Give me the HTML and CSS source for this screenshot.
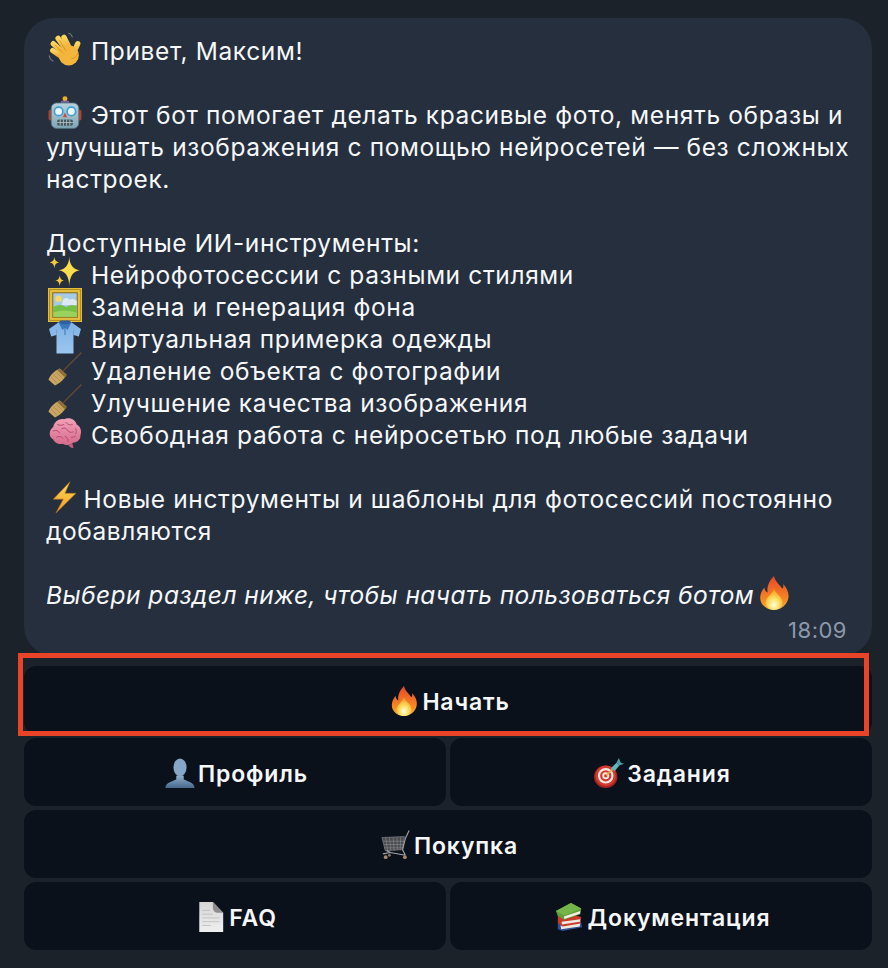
FILE: index.html
```html
<!DOCTYPE html>
<html lang="ru">
<head>
    <meta charset="UTF-8">
    <title>Бот - стартовое сообщение</title>
    <link rel="stylesheet" href="styles.css">
</head>
<body>
    <svg class="sprite" xmlns="http://www.w3.org/2000/svg">
        <defs>
            <linearGradient id="g-hand" x1="0" y1="0" x2="0" y2="1"><stop offset="0" stop-color="#fbd45e"/><stop offset="1" stop-color="#eca42c"/></linearGradient>
            <linearGradient id="g-fire" x1="0" y1="0" x2="0" y2="1"><stop offset="0" stop-color="#e8452a"/><stop offset="0.7" stop-color="#f58a22"/><stop offset="1" stop-color="#fbb03b"/></linearGradient>
            <radialGradient id="g-flame" cx="0.5" cy="0.75" r="0.65"><stop offset="0" stop-color="#fffde0"/><stop offset="0.45" stop-color="#ffe166"/><stop offset="1" stop-color="#f9a024"/></radialGradient>
            <linearGradient id="g-person" x1="0" y1="0" x2="0" y2="1"><stop offset="0" stop-color="#8eaecd"/><stop offset="1" stop-color="#47688c"/></linearGradient>
            <linearGradient id="g-shirt" x1="0" y1="0" x2="0" y2="1"><stop offset="0" stop-color="#7fb2e6"/><stop offset="1" stop-color="#9cc6ee"/></linearGradient>
            <linearGradient id="g-bolt" x1="0" y1="0" x2="0" y2="1"><stop offset="0" stop-color="#fbdc5c"/><stop offset="1" stop-color="#f29a1f"/></linearGradient>
            <linearGradient id="g-brain" x1="0" y1="0" x2="0" y2="1"><stop offset="0" stop-color="#f2a3b8"/><stop offset="1" stop-color="#d76a8c"/></linearGradient>
            <linearGradient id="g-page" x1="0" y1="0" x2="0" y2="1"><stop offset="0" stop-color="#d6d6d6"/><stop offset="1" stop-color="#efefef"/></linearGradient>
            <linearGradient id="g-robot" x1="0" y1="0" x2="0" y2="1"><stop offset="0" stop-color="#b6d2dc"/><stop offset="1" stop-color="#7fa6b6"/></linearGradient>
        </defs>
        <symbol id="e-wave" viewBox="0 0 32 32">
            <path d="M19 1c2 .5 3.500 2 4 4M1 22c.5 2.500 2 4.500 4 5.500" fill="none" stroke="#6d7682" stroke-width="1"/>
            <g stroke="url(#g-hand)" stroke-linecap="round" fill="none" stroke-width="5">
                <path d="M21 17 15 5"/>
                <path d="M18 18 9.500 6"/>
                <path d="M15 20 5 11"/>
                <path d="M14 24 4.500 17.500"/>
                <path d="M24 20 28 11"/>
            </g>
            <ellipse cx="19.500" cy="22" rx="9.500" ry="9.500" fill="#f2b63c"/>
            <path d="M11 8l6 10M6.500 12l8 8M22 25c3 0 5-2 6-5" fill="none" stroke="#d98f1e" stroke-width=".8"/>
        </symbol>
        <symbol id="e-robot" viewBox="0 0 32 32">
            <rect x="14.500" y="3" width="3" height="4" fill="#f0a21e"/>
            <circle cx="16" cy="2.500" r="2.300" fill="#f2ad2a"/>
            <rect x="12" y="4.500" width="8" height="2.500" rx="1.200" fill="#7a5fa8"/>
            <rect x="0.500" y="13" width="4" height="10" rx="1.500" fill="#b3402f"/>
            <rect x="27.500" y="13" width="4" height="10" rx="1.500" fill="#b3402f"/>
            <rect x="3" y="6.500" width="26" height="24" rx="5" fill="url(#g-robot)" stroke="#4d6b7a" stroke-width=".8"/>
            <circle cx="10" cy="14.500" r="4" fill="#e8f7ff" stroke="#3fa0d8" stroke-width="1.600"/>
            <circle cx="22" cy="14.500" r="4" fill="#e8f7ff" stroke="#3fa0d8" stroke-width="1.600"/>
            <path d="M16 15.500 18 20H14Z" fill="#d8483a"/>
            <rect x="8.500" y="22" width="15" height="6" rx="2" fill="#43575f"/>
            <path d="M11.500 22v6M14.500 22v6M17.500 22v6M20.500 22v6M8.500 25h15" stroke="#b4c4ca" stroke-width=".8"/>
        </symbol>
        <symbol id="e-sparkles" viewBox="0 0 32 32">
            <path d="M20 .5Q20.500 12.500 30 13.500 20.500 14.500 20 28.500 19.500 14.500 10 13.500 19.500 12.500 20 .5Z" fill="#f9dc4e"/>
            <path d="M6 1Q6.300 5.700 10.500 6 6.300 6.300 6 11.500 5.700 6.300 1.500 6 5.700 5.700 6 1Z" fill="#f4c93a"/>
            <path d="M11 18Q11.300 22.700 15 23 11.300 23.300 11 28.500 10.700 23.300 7 23 10.700 22.700 11 18Z" fill="#f4c93a"/>
        </symbol>
        <symbol id="e-picture" viewBox="0 0 32 32">
            <rect x="0" y="0" width="32" height="32" fill="#e3bd3c"/>
            <rect x="1.500" y="1.500" width="29" height="29" fill="none" stroke="#a8841f" stroke-width=".8"/>
            <rect x="4.500" y="4.500" width="23" height="23" fill="#a5cbe8" stroke="#8c6c18"/>
            <circle cx="10" cy="10" r="3" fill="#f4dc62"/>
            <path d="M14 11c2-2 5-2 6 0 2-1 5-1 7 1v4H13Z" fill="#dce8f2"/>
            <path d="M5 18c5-3 9-2 12 0 3-2 7-2 10-1v10H5Z" fill="#74bf48"/>
            <path d="M5 23c6-2 14-2 22 0v4H5Z" fill="#9ad25e"/>
        </symbol>
        <symbol id="e-shirt" viewBox="0 0 32 32">
            <path d="M10 2 1 8.500 3 15.500 8 14V31.500H24V14L29 15.500 31 8.500 22 2Z" fill="url(#g-shirt)"/>
            <path d="M10 2 16 8 22 2 20 .5H12Z" fill="#2f5f9e"/>
            <path d="M10 2 13.500 9.500 16 7 18.500 9.500 22 2 19 4H13Z" fill="#3e78bb"/>
            <path d="M16 7v7" stroke="#3e78bb" stroke-width="1"/>
            <path d="M8 14V9M24 14V9" stroke="#6a9fd6" stroke-width=".8"/>
        </symbol>
        <symbol id="e-broom" viewBox="0 0 32 32">
            <path d="M31.500 .5 14 18" stroke="#6d4c35" stroke-width="1.100"/>
            <path d="M11 15.500 17.500 21.500C15.500 25.500 10 30.500 6.500 31.500L.5 26C1.500 22 6.500 17.500 11 15.500Z" fill="#c9a661"/>
            <path d="M11 15.500 17.500 21.500 16 24 8.500 17Z" fill="#8d6f3a"/>
            <path d="M5 21 11.500 27.500M3 23.500 8.500 29.500M8 19.500 14 25" stroke="#a3854a" stroke-width=".7"/>
        </symbol>
        <symbol id="e-brain" viewBox="0 0 32 32">
            <path d="M19 27c1 2 3 3.500 5 3l-1-4Z" fill="#c65a7c"/>
            <path d="M5 10C6 5 11 2 15 3 20 .5 26 3 27 8 31 10 32 15 30.500 18 31 22 27 25 24 25 21 28 16 27.500 14 26 10 27 6 25 5 22 1 20 0 14 5 10Z" fill="url(#g-brain)"/>
            <path d="M9 8c2 1 4 1 6 0M17 6c1 2 4 3 6 2M5 14c3-1 5 0 6 2M13 12c2-1 4-1 5 1s3 3 6 2M26 12c1 2 1 4 0 5M8 20c2-1 5-1 6 1M16 19c2 1 3 3 3 5M22 20c1 0 3 0 4-1" fill="none" stroke="#b54a6e" stroke-width=".9" stroke-linecap="round"/>
        </symbol>
        <symbol id="e-bolt" viewBox="0 0 32 32">
            <path d="M20.700 1.600 5 18H14.400L7.500 31 26.400 12.500H16Z" fill="url(#g-bolt)" stroke="#b9701a" stroke-width=".6"/>
        </symbol>
        <symbol id="e-fire" viewBox="0 0 32 32">
            <path d="M16 0C17 5 21 8 24 12 25 10.500 25 9 24.500 7.500 28 11 30.500 16 29.500 21 28.500 27 22.500 32 16 32 9 32 3 27 3 20.500 3 16.500 5 13.500 7 10.500 7 13 8 14.500 10 15.500 9 9.500 12 4 16 0Z" fill="url(#g-fire)"/>
            <path d="M16 12C17.500 17 24 19 24 25 24 29 20.500 32 16 32 11.500 32 8 29 8 25 8 20 14 18 16 12Z" fill="url(#g-flame)"/>
        </symbol>
        <symbol id="e-person" viewBox="0 0 32 32">
            <path d="M.5 32C.5 27 6 25.500 12 23V19H20V23C26 25.500 31.500 27 31.500 32Z" fill="url(#g-person)"/>
            <ellipse cx="16" cy="10" rx="7" ry="9.500" fill="#85a6c6"/>
        </symbol>
        <symbol id="e-target" viewBox="0 0 32 32">
            <ellipse cx="12.500" cy="20" rx="12.500" ry="12" fill="#a82420"/>
            <circle cx="12.500" cy="19" r="11" fill="#d43a30"/>
            <circle cx="12.500" cy="19" r="8.300" fill="#f3e9e4"/>
            <circle cx="12.500" cy="19" r="6" fill="#d43a30"/>
            <circle cx="12.500" cy="19" r="3.700" fill="#f3e9e4"/>
            <circle cx="12.500" cy="19" r="1.800" fill="#d43a30"/>
            <path d="M13 18.500 22 10" stroke="#e0b04a" stroke-width="1.600"/>
            <path d="M18 11 24 5 27 8 22 14Z" fill="#5fb6bd"/>
            <path d="M24 5 26.500 0 28.500 5 32 6 27 8Z" fill="#4aa3ac"/>
        </symbol>
        <symbol id="e-cart" viewBox="0 0 32 32">
            <path d="M1 8 25 7 23 21 4.500 22Z" fill="#4a4c50"/>
            <path d="M1 8 25 7 23 21 4.500 22ZM5 8 7 22M9 8 10.500 22M13 8 14 22M17 8 17.500 21M21 7.500 20.500 21M2 12H24.500M3 15.500H24M3.500 19H23.500" fill="none" stroke="#85878b" stroke-width=".7"/>
            <path d="M23 21 26 9 30 .5" fill="none" stroke="#a0a2a6" stroke-width="1.200"/>
            <path d="M2 25.500 10 24 26 27M23 21 26 27M6 22 10 24" fill="none" stroke="#a5a7ab" stroke-width="1.200"/>
            <circle cx="5" cy="29" r="2" fill="#a58a6e"/>
            <circle cx="25.500" cy="29" r="2" fill="#a58a6e"/>
            <circle cx="9" cy="27" r="1.500" fill="#8a7660"/>
        </symbol>
        <symbol id="e-page" viewBox="0 0 32 32">
            <path d="M3.500 0H18L29 11.500V32H3.500Z" fill="url(#g-page)"/>
            <path d="M18 0 29 11.500H24C20 11.500 18 9 18 6Z" fill="#8d8d8d"/>
            <path d="M6.500 9H15M6.500 13H18M6.500 17H25M6.500 21H25M6.500 25H16" stroke="#bdbdbd" stroke-width=".9"/>
        </symbol>
        <symbol id="e-books" viewBox="0 0 32 32">
            <path d="M3 22 27 18 29 27 8 31 3 29Z" fill="#2f4f96"/>
            <path d="M6 25 27 21.500 26.500 26 6.500 29Z" fill="#eee7dc"/>
            <path d="M3 13 9 11 28 16 27 23 8 26 3 22Z" fill="#c83a2a"/>
            <path d="M7 21 27 18.500 26.500 21 7.500 24Z" fill="#f1e9dd"/>
            <path d="M1 9.500 17 1 28 7 27 13 10 19 3 15Z" fill="#5f9f3c"/>
            <path d="M1 9.500 17 1 28 7 10 14.500Z" fill="#74b54a"/>
            <path d="M9.500 15.500 27 9.500 26.500 12.500 10 18Z" fill="#f4eee2"/>
        </symbol>
    </svg>

    <div class="chat">
        <div class="message">
            <div class="message-text">
                <svg class="emoji"><use href="#e-wave"/></svg> Привет, Максим!<br>
                <br>
                <svg class="emoji"><use href="#e-robot"/></svg> Этот бот помогает делать красивые фото, менять образы и улучшать изображения с помощью нейросетей — без сложных настроек.<br>
                <br>
                Доступные ИИ-инструменты:<br>
                <svg class="emoji"><use href="#e-sparkles"/></svg> Нейрофотосессии с разными стилями<br>
                <svg class="emoji"><use href="#e-picture"/></svg> Замена и генерация фона<br>
                <svg class="emoji"><use href="#e-shirt"/></svg> Виртуальная примерка одежды<br>
                <svg class="emoji"><use href="#e-broom"/></svg> Удаление объекта с фотографии<br>
                <svg class="emoji"><use href="#e-broom"/></svg> Улучшение качества изображения<br>
                <svg class="emoji"><use href="#e-brain"/></svg> Свободная работа с нейросетью под любые задачи<br>
                <br>
                <svg class="emoji"><use href="#e-bolt"/></svg>Новые инструменты и шаблоны для фотосессий постоянно добавляются<br>
                <br>
                <em>Выбери раздел ниже, чтобы начать пользоваться ботом</em><svg class="emoji emoji-end"><use href="#e-fire"/></svg>
            </div>
            <div class="message-time">18:09</div>
        </div>

        <div class="keyboard">
            <div class="highlight"></div>
            <div class="key-row">
                <button class="key"><svg class="key-emoji"><use href="#e-fire"/></svg>Начать</button>
            </div>
            <div class="key-row">
                <button class="key"><svg class="key-emoji"><use href="#e-person"/></svg>Профиль</button>
                <button class="key"><svg class="key-emoji"><use href="#e-target"/></svg>Задания</button>
            </div>
            <div class="key-row">
                <button class="key"><svg class="key-emoji"><use href="#e-cart"/></svg>Покупка</button>
            </div>
            <div class="key-row">
                <button class="key"><svg class="key-emoji"><use href="#e-page"/></svg>FAQ</button>
                <button class="key"><svg class="key-emoji"><use href="#e-books"/></svg>Документация</button>
            </div>
        </div>
    </div>
</body>
</html>
```

FILE: styles.css
```css
html, body {
    margin: 0;
    padding: 0;
}
body {
    background-color: #1b2229;
    font-family: Inter, 'Noto Sans', sans-serif;
    color: #f5f7f9;
}
.sprite {
    position: absolute;
    width: 0;
    height: 0;
}
.chat {
    padding: 18px 16px 18px 24px;
}
.message {
    height: 638px;
    box-sizing: border-box;
    padding: 17px 22px 0;
    background-color: #252f3e;
    border-radius: 30px;
}
.message-text {
    font-size: 24.5px;
    line-height: 32px;
    letter-spacing: 0.63px;
}
.message-text em {
    font-style: italic;
    letter-spacing: 0.45px;
}
.emoji {
    width: 34px;
    height: 34px;
    margin: -4px 1.5px -4px 2px;
    vertical-align: -2px;
}
.emoji-end {
    margin-left: 3px;
    margin-right: 0;
}
.message-time {
    margin: 3px 3px 0 0;
    text-align: right;
    font-size: 22px;
    line-height: 32px;
    letter-spacing: 0.5px;
    color: #8c99aa;
}
.keyboard {
    position: relative;
    display: flex;
    flex-direction: column;
    gap: 4px;
    margin-top: 10px;
}
.highlight {
    position: absolute;
    left: -6px;
    top: -13px;
    width: 851px;
    height: 83px;
    box-sizing: border-box;
    border: 5px solid #e94428;
    pointer-events: none;
}
.key-row {
    display: flex;
    gap: 4px;
}
.key {
    flex: 1;
    display: flex;
    justify-content: center;
    align-items: center;
    gap: 3px;
    height: 68px;
    padding: 4px 0 0 3px;
    background-color: #0a111b;
    border: none;
    border-radius: 12px;
    color: #f5f7f9;
    font-family: inherit;
    font-size: 23px;
    font-weight: 600;
    letter-spacing: 0.85px;
}
.key-emoji {
    width: 30px;
    height: 30px;
    margin-top: -3px;
}
```
